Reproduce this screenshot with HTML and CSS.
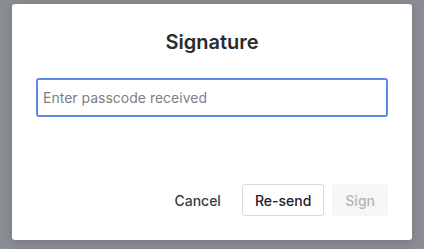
FILE: index.html
```html
<!DOCTYPE html>
<html>
<head>
    <meta charset="UTF-8">
    <title>Signature</title>
    <link rel="stylesheet" href="styles.css">
</head>
<body>
    <div class="dialog">
        <h1 class="dialog-title">Signature</h1>
        <div class="dialog-body">
            <input type="text" class="passcode-input" placeholder="Enter passcode received" autofocus>
        </div>
        <div class="dialog-actions">
            <button class="btn btn-plain">Cancel</button>
            <button class="btn btn-outline">Re-send</button>
            <button class="btn btn-disabled" disabled>Sign</button>
        </div>
    </div>
</body>
</html>
```
FILE: styles.css
```css
body {
    margin: 0;
    height: 249px;
    background-color: #8a8c94;
    font-family: Inter, "Noto Sans", sans-serif;
    display: flex;
    justify-content: center;
    padding-top: 4px;
    box-sizing: border-box;
    overflow: hidden;
}

.dialog {
    width: 400px;
    height: 236px;
    background-color: #fff;
    border-radius: 3px;
    box-sizing: border-box;
    padding: 26px 24px 24px;
    display: flex;
    flex-direction: column;
    box-shadow: 0 2px 8px rgba(0, 0, 0, 0.15);
}

.dialog-title {
    margin: 0;
    text-align: center;
    font-size: 20px;
    font-weight: 600;
    color: #2a2b2e;
    line-height: 24px;
}

.dialog-body {
    margin-top: 24px;
    flex: 1;
}

.passcode-input {
    width: 100%;
    height: 39px;
    box-sizing: border-box;
    border: 2px solid #5b8ae6;
    border-radius: 3px;
    padding: 0 5px;
    font-family: inherit;
    font-size: 14px;
    color: #2a2b2e;
    caret-color: #2a2b2e;
    outline: none;
}

.passcode-input::placeholder {
    color: #7d7f86;
}

.dialog-actions {
    display: flex;
    justify-content: flex-end;
    align-items: center;
    gap: 8px;
}

.btn {
    height: 32px;
    padding: 0 12px;
    font-family: inherit;
    font-size: 14px;
    font-weight: 500;
    border-radius: 3px;
    border: 1px solid transparent;
    background: none;
    color: #2a2b2e;
}

.btn-plain {
    color: #3b3c40;
}

.btn-outline {
    border-color: #d9dadd;
    background-color: #fff;
    color: #1f2023;
}

.btn-disabled {
    background-color: #f6f6f7;
    color: #b4b5b9;
}
```
